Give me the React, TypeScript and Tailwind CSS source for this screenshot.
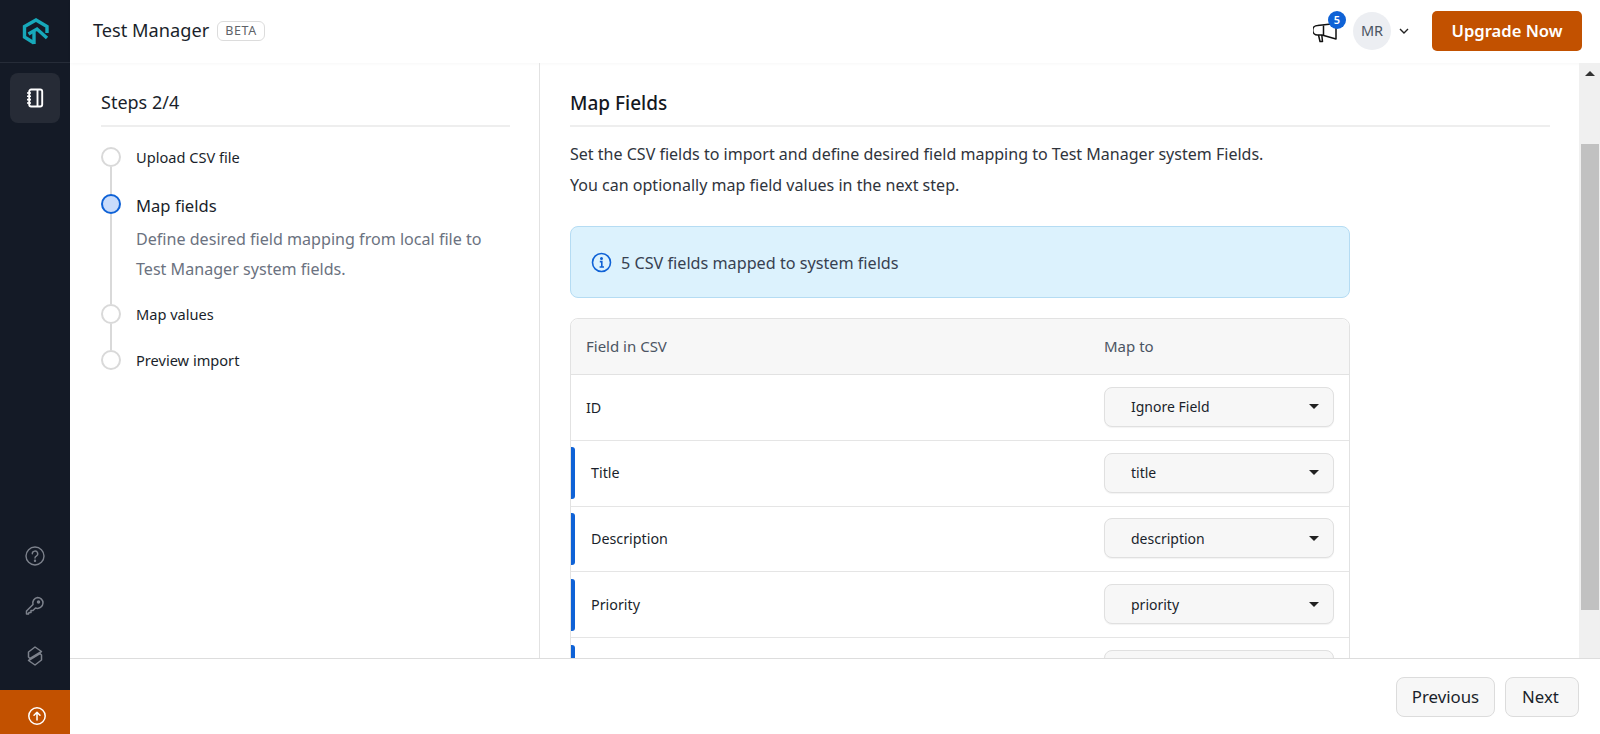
import React from "react";

const font = { fontFamily: '"Noto Sans", sans-serif' };

function Logo() {
  return (
    <svg width="27" height="27" viewBox="-1 -1 27 27" fill="none" stroke="#17a9ba" strokeWidth="3.4">
      <path d="M24 14 V7.5 L13 1 L1.5 7.5 V18 L11 24" />
      <path d="M5.5 15 L14 10 L24 19" />
      <path d="M11 13 V25" />
    </svg>
  );
}

function Notebook() {
  return (
    <svg width="18" height="20" viewBox="0 0 18 20" fill="none" stroke="#fff" strokeWidth="1.9">
      <rect x="3.2" y="1.5" width="13" height="17" rx="2" />
      <path d="M11.5 2 V18" />
      <path d="M1 5 H5 M1 8.3 H5 M1 11.6 H5 M1 15 H5" strokeWidth="1.6" />
    </svg>
  );
}

function Step({ label, big, active, desc, h }: { label: string; big?: boolean; active?: boolean; desc?: boolean; h: string }) {
  return (
    <div className={`flex gap-[15px] ${h}`}>
      <div className="flex w-[20px] shrink-0 flex-col items-center">
        <div className={`z-10 h-[20px] w-[20px] shrink-0 rounded-full ${active ? "border-[2.5px] border-[#0f62d6] bg-[#c9dcfb]" : "border-2 border-[#d9d9d9] bg-white"}`} />
        <div className="w-[2px] grow bg-[#d9d9d9]" />
      </div>
      <div>
        <div className={big ? "pt-[1px] text-[16.6px] leading-[22px] text-[#1a1f2b]" : "text-[14.6px] leading-[20px] text-[#1a1f2b]"}>{label}</div>
        {desc && (
          <p className="mt-[7px] text-[16.1px] leading-[30px] text-[#6b7280]">
            Define desired field mapping from local file to<br />Test Manager system fields.
          </p>
        )}
      </div>
    </div>
  );
}

function Row({ name, value, mapped }: { name: string; value: string; mapped?: boolean }) {
  return (
    <div className="flex h-[65.8px] shrink-0 items-center border-b border-[#e5e5e5]">
      <div className={`my-[7px] h-[52px] w-[4px] shrink-0 rounded-r-[3px] ${mapped ? "bg-[#0f62d6]" : "bg-transparent"}`} />
      <div className={`grow text-[14.3px] text-[#1a1f2b] ${mapped ? "pl-[16px]" : "pl-[11px]"}`}>{name}</div>
      <div className="mb-[1px] mr-[15px] flex h-[40px] w-[230px] items-center justify-between rounded-[8px] border border-[#e0e0e0] bg-[#f7f7f7] pl-[26px] pr-[14px] text-[14px] text-[#1a1f2b] shadow-[0_1px_1px_rgba(0,0,0,0.05)]">
        {value}
        <span className="h-0 w-0 border-x-[5px] border-t-[5px] border-x-transparent border-t-[#222]" />
      </div>
    </div>
  );
}

export default function App() {
  return (
    <div style={font} className="flex h-[734px] w-[1600px] overflow-hidden bg-white">
      <aside className="flex w-[70px] shrink-0 flex-col bg-[#141a26]">
        <div className="flex h-[63px] shrink-0 items-center justify-center border-b border-[#262c38]">
          <Logo />
        </div>
        <div className="mx-[10px] mt-[10px] flex h-[50px] w-[50px] items-center justify-center rounded-[8px] bg-[#262b36]">
          <Notebook />
        </div>
        <div className="mt-auto flex flex-col items-center gap-[30px] pb-[24px] text-[#7d828c]">
          <svg width="20" height="20" viewBox="0 0 20 20" fill="none" stroke="currentColor" strokeWidth="1.4" strokeLinecap="round">
            <circle cx="10" cy="10" r="9" />
            <path d="M7.3 7.8 a2.7 2.7 0 1 1 4 2.3 c-.9.5-1.3 1-1.3 2" />
            <circle cx="10" cy="14.7" r=".5" fill="currentColor" />
          </svg>
          <svg width="20" height="20" viewBox="0 0 20 20" fill="none" stroke="currentColor" strokeWidth="1.5" strokeLinejoin="round">
            <path d="M12.5 1.5 a5.5 5.5 0 0 1 5.5 5.5 a5.5 5.5 0 0 1 -7.5 5 L8 14.5 H6 V16.5 H4 L3.5 18 H1.5 V15 L8 8.5 A5.5 5.5 0 0 1 12.5 1.5 Z" />
            <circle cx="13.5" cy="6" r="1" fill="currentColor" />
          </svg>
          <svg width="16" height="20" viewBox="0 0 16 20" fill="none" stroke="currentColor" strokeWidth="1.5" strokeLinejoin="round">
            <path d="M8 1 L14.5 5.5 L3 12.5 L1.5 11 V6 Z" />
            <path d="M8 19 L1.5 14.5 L13 7.5 L14.5 9 V14 Z" />
          </svg>
        </div>
        <div className="flex h-[44px] shrink-0 items-center justify-center bg-[#c25100] pl-[4px] pt-[7px]">
          <svg width="18" height="18" viewBox="0 0 18 18" fill="none" stroke="#fff" strokeWidth="1.5" strokeLinecap="round" strokeLinejoin="round">
            <circle cx="9" cy="9" r="8.2" />
            <path d="M9 13 V5.5 M6 8.2 L9 5.2 L12 8.2" />
          </svg>
        </div>
      </aside>

      <div className="flex min-w-0 grow flex-col">
        <header className="flex h-[63px] shrink-0 items-center bg-white pb-[1px] pl-[23px] pr-[18px] shadow-[0_1px_3px_rgba(0,0,0,0.03)]">
          <span className="text-[18.2px] text-[#1a1f2b]">Test Manager</span>
          <span className="ml-[8px] rounded-[6px] border border-[#dcdcdc] px-[7px] text-[12.5px] leading-[18px] tracking-[0.6px] text-[#5f6368]">BETA</span>
          <div className="ml-auto flex items-center">
            <div className="relative mr-[13px] h-[24px] w-[27px]">
              <svg className="absolute left-0 top-[3px]" width="25" height="21" viewBox="0 0 25 21" fill="none" stroke="#111" strokeWidth="1.5" strokeLinejoin="round">
                <path d="M4.5 3.5 L23 1.5 V17 L9 13 H4.5 A4.7 4.7 0 0 1 4.5 3.5 Z" />
                <path d="M5.5 13 L7 19.5 H9.5 L8.8 13 M10.5 3.5 V13" />
              </svg>
              <span className="absolute left-[15px] top-[-8px] flex h-[18px] w-[18px] items-center justify-center rounded-full bg-[#0f62d6] text-[11px] font-semibold text-white">5</span>
            </div>
            <span className="flex h-[38px] w-[38px] items-center justify-center rounded-full bg-[#eceef2] text-[14.5px] text-[#4b5563]">MR</span>
            <svg className="ml-[7px]" width="12" height="12" viewBox="0 0 12 12" fill="none" stroke="#222" strokeWidth="1.4"><path d="M2 4 L6 8 L10 4" /></svg>
            <button className="ml-[22px] h-[40px] w-[150px] rounded-[5px] bg-[#c25100] text-[16.6px] font-semibold text-white">Upgrade Now</button>
          </div>
        </header>

        <div className="flex min-h-0 grow">
          <section className="w-[470px] shrink-0 border-r border-[#e2e2e2] pl-[31px] pr-[29px]">
            <h2 className="flex h-[64px] items-end border-b-2 border-[#eeeeee] pb-[10px] text-[18px] leading-[26px] text-[#1a1f2b]">Steps 2/4</h2>
            <div className="mt-[20px]">
              <Step label="Upload CSV file" h="h-[47px]" />
              <Step label="Map fields" big active desc h="h-[110px]" />
              <Step label="Map values" h="h-[46px]" />
              <div className="flex gap-[15px]">
                <div className="z-10 h-[20px] w-[20px] rounded-full border-2 border-[#d9d9d9] bg-white" />
                <div className="text-[14.6px] leading-[20px] text-[#1a1f2b]">Preview import</div>
              </div>
            </div>
          </section>

          <main className="flex min-w-0 grow flex-col overflow-hidden pl-[30px] pr-[29px]">
            <h2 className="flex h-[64px] shrink-0 items-end border-b-2 border-[#eeeeee] pb-[9px] text-[19px] font-medium leading-[26px] text-[#14181f]">Map Fields</h2>
            <p className="mt-[12px] shrink-0 text-[16.05px] leading-[30.5px] text-[#2f343c]">
              Set the CSV fields to import and define desired field mapping to Test Manager system Fields.<br />
              You can optionally map field values in the next step.
            </p>
            <div className="mt-[26px] flex h-[72px] w-[780px] shrink-0 items-center gap-[9px] rounded-[8px] border border-[#b5dcf3] bg-[#dcf2fd] pl-[20px] text-[16.2px] text-[#374151]">
              <svg width="21" height="21" viewBox="0 0 21 21" fill="none" stroke="#0f62d6" strokeWidth="1.6">
                <circle cx="10.5" cy="10.5" r="9" />
                <path d="M8.8 9.6 H10.8 V15 M8.6 15 H13" />
                <circle cx="10.5" cy="6.4" r=".7" fill="#0f62d6" />
              </svg>
              <span className="pt-[3px]">5 CSV fields mapped to system fields</span>
            </div>
            <div className="mt-[20px] w-[780px] shrink-0 rounded-t-[8px] border border-[#e2e2e2]">
              <div className="flex h-[56px] items-center rounded-t-[8px] border-b border-[#e2e2e2] bg-[#f7f7f7] pl-[15px] text-[15px] text-[#4b5563]">
                <span className="w-[518px]">Field in CSV</span>
                <span>Map to</span>
              </div>
              <Row name="ID" value="Ignore Field" />
              <Row name="Title" value="title" mapped />
              <Row name="Description" value="description" mapped />
              <Row name="Priority" value="priority" mapped />
              <Row name="" value="" mapped />
            </div>
          </main>

          <div className="flex w-[21px] shrink-0 flex-col items-center bg-[#f0f0f0]">
            <span className="mt-[8px] h-0 w-0 border-x-[5px] border-b-[5px] border-x-transparent border-b-[#333]" />
            <div className="mt-[68px] h-[466px] w-[18px] bg-[#c1c1c1]" />
          </div>
        </div>

        <footer className="flex h-[76px] shrink-0 items-center justify-end gap-[10px] border-t border-[#dddddd] bg-white pr-[21px] text-[16.8px] text-[#1a1f2b]">
          <button className="h-[40px] w-[99px] rounded-[8px] border border-[#dcdcdc] bg-[#f7f7f7]">Previous</button>
          <button className="h-[40px] w-[74px] rounded-[8px] border border-[#dcdcdc] bg-[#f7f7f7] pr-[3px]">Next</button>
        </footer>
      </div>
    </div>
  );
}
